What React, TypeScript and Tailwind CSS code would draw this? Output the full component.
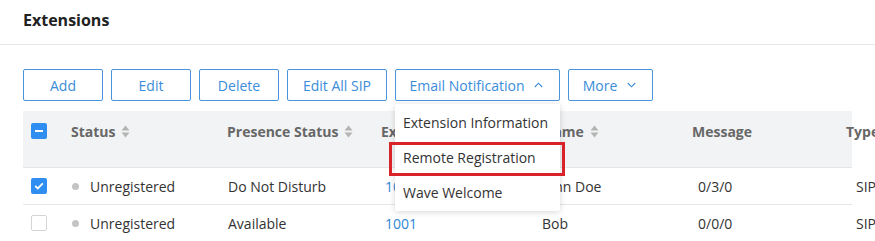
import React from "react";

const buttons = [
  { label: "Add", w: "w-[80px]" },
  { label: "Edit", w: "w-[80px]" },
  { label: "Delete", w: "w-[80px]" },
  { label: "Edit All SIP", w: "w-[100px]" },
];

const rows = [
  { checked: true, status: "Unregistered", presence: "Do Not Disturb", ext: "1000", name: "John Doe", msg: "0/3/0", type: "SIP" },
  { checked: false, status: "Unregistered", presence: "Available", ext: "1001", name: "Bob", msg: "0/0/0", type: "SIP" },
];

function SortIcon() {
  return (
    <svg width="9" height="13" viewBox="0 0 9 13" className="ml-[6px] shrink-0">
      <path d="M4.5 0.5 L8.5 5.5 L0.5 5.5 Z" fill="#b4b4b4" />
      <path d="M4.5 12.5 L8.5 7.5 L0.5 7.5 Z" fill="#b4b4b4" />
    </svg>
  );
}

function Chevron({ up }: { up?: boolean }) {
  return (
    <svg width="9" height="6" viewBox="0 0 9 6" className="ml-[10px]">
      <path
        d={up ? "M0.8 5 L4.5 1.2 L8.2 5" : "M0.8 1 L4.5 4.8 L8.2 1"}
        fill="none"
        stroke="#3b8cd9"
        strokeWidth="1.1"
      />
    </svg>
  );
}

function Checkbox({ state }: { state: "on" | "off" | "mixed" }) {
  if (state === "off") {
    return <span className="block h-[16px] w-[16px] rounded-[2px] border border-[#d4d4d4] bg-white" />;
  }
  return (
    <span className="flex h-[16px] w-[16px] items-center justify-center rounded-[2px] bg-[#2f8ef0]">
      {state === "mixed" ? (
        <span className="block h-[2px] w-[8px] bg-white" />
      ) : (
        <svg width="10" height="8" viewBox="0 0 10 8">
          <path d="M1.2 4 L3.8 6.4 L8.8 1.4" fill="none" stroke="white" strokeWidth="1.8" />
        </svg>
      )}
    </span>
  );
}

const cols = "grid grid-cols-[48px_156px_154px_161px_150px_154px_1fr]";

export default function App() {
  return (
    <div className="h-[241px] w-[875px] overflow-hidden bg-white font-['Open_Sans',sans-serif] text-[14px] text-[#333]">
      <div className="flex h-[45px] items-center border-b border-[#e8e8e8] pb-[4px] pl-[23px]">
        <h1 className="text-[16px] font-bold text-[#222]">Extensions</h1>
      </div>

      <div className="px-[23px]">
        <div className="mt-[24px] flex gap-[8px]">
          {buttons.map((b) => (
            <button
              key={b.label}
              className={`${b.w} flex h-[32px] items-center justify-center rounded-[2px] border border-[#4a94dc] text-[#3b8cd9]`}
            >
              {b.label}
            </button>
          ))}
          <div className="relative">
            <button className="flex h-[32px] w-[165px] items-center justify-center rounded-[2px] border border-[#4a94dc] pr-[2px] text-[#3b8cd9]">
              Email Notification
              <Chevron up />
            </button>
            <div className="absolute left-0 top-[35px] z-10 w-[165px] rounded-[2px] bg-white py-[1px] shadow-[0_1px_6px_rgba(0,0,0,0.16)]">
              {["Extension Information", "Remote Registration", "Wave Welcome"].map((t) => (
                <div key={t} className="flex h-[35px] items-center pl-[8px] text-[#333]">
                  {t}
                </div>
              ))}
            </div>
            <div className="absolute left-[-6px] top-[73px] z-20 h-[34px] w-[176px] border-[3px] border-[#d8232a]" />
          </div>
          <button className="flex h-[32px] w-[85px] items-center justify-center rounded-[2px] border border-[#4a94dc] pr-[2px] text-[#3b8cd9]">
            More
            <Chevron />
          </button>
        </div>

        <div className="mt-[10px]">
          <div className={`${cols} h-[56px] bg-[#f2f3f5] pt-[10px] font-bold text-[#676767]`}>
            <div className="flex h-[20px] items-center pl-[8px]">
              <Checkbox state="mixed" />
            </div>
            <div className="flex h-[20px] items-center">
              Status
              <SortIcon />
            </div>
            <div className="flex h-[20px] items-center">
              Presence Status
              <SortIcon />
            </div>
            <div className="flex h-[20px] items-center">
              Extension
              <SortIcon />
            </div>
            <div className="flex h-[20px] items-center">
              Name
              <SortIcon />
            </div>
            <div className="flex h-[20px] items-center">Message</div>
            <div className="flex h-[20px] items-center whitespace-nowrap">Type</div>
          </div>
          {rows.map((r) => (
            <div key={r.ext} className={`${cols} h-[37px] items-center border-t border-[#e6e6e6]`}>
              <div className="pl-[8px]">
                <Checkbox state={r.checked ? "on" : "off"} />
              </div>
              <div className="flex items-center">
                <span className="ml-[1px] mr-[11px] block h-[7px] w-[7px] rounded-full bg-[#c4c4c4]" />
                {r.status}
              </div>
              <div className="pl-[1px]">{r.presence}</div>
              <div className="pl-[4px] text-[#2f86d6]">{r.ext}</div>
              <div>{r.name}</div>
              <div className="pl-[6px]">{r.msg}</div>
              <div className="pl-[10px]">{r.type}</div>
            </div>
          ))}
        </div>
      </div>
    </div>
  );
}
